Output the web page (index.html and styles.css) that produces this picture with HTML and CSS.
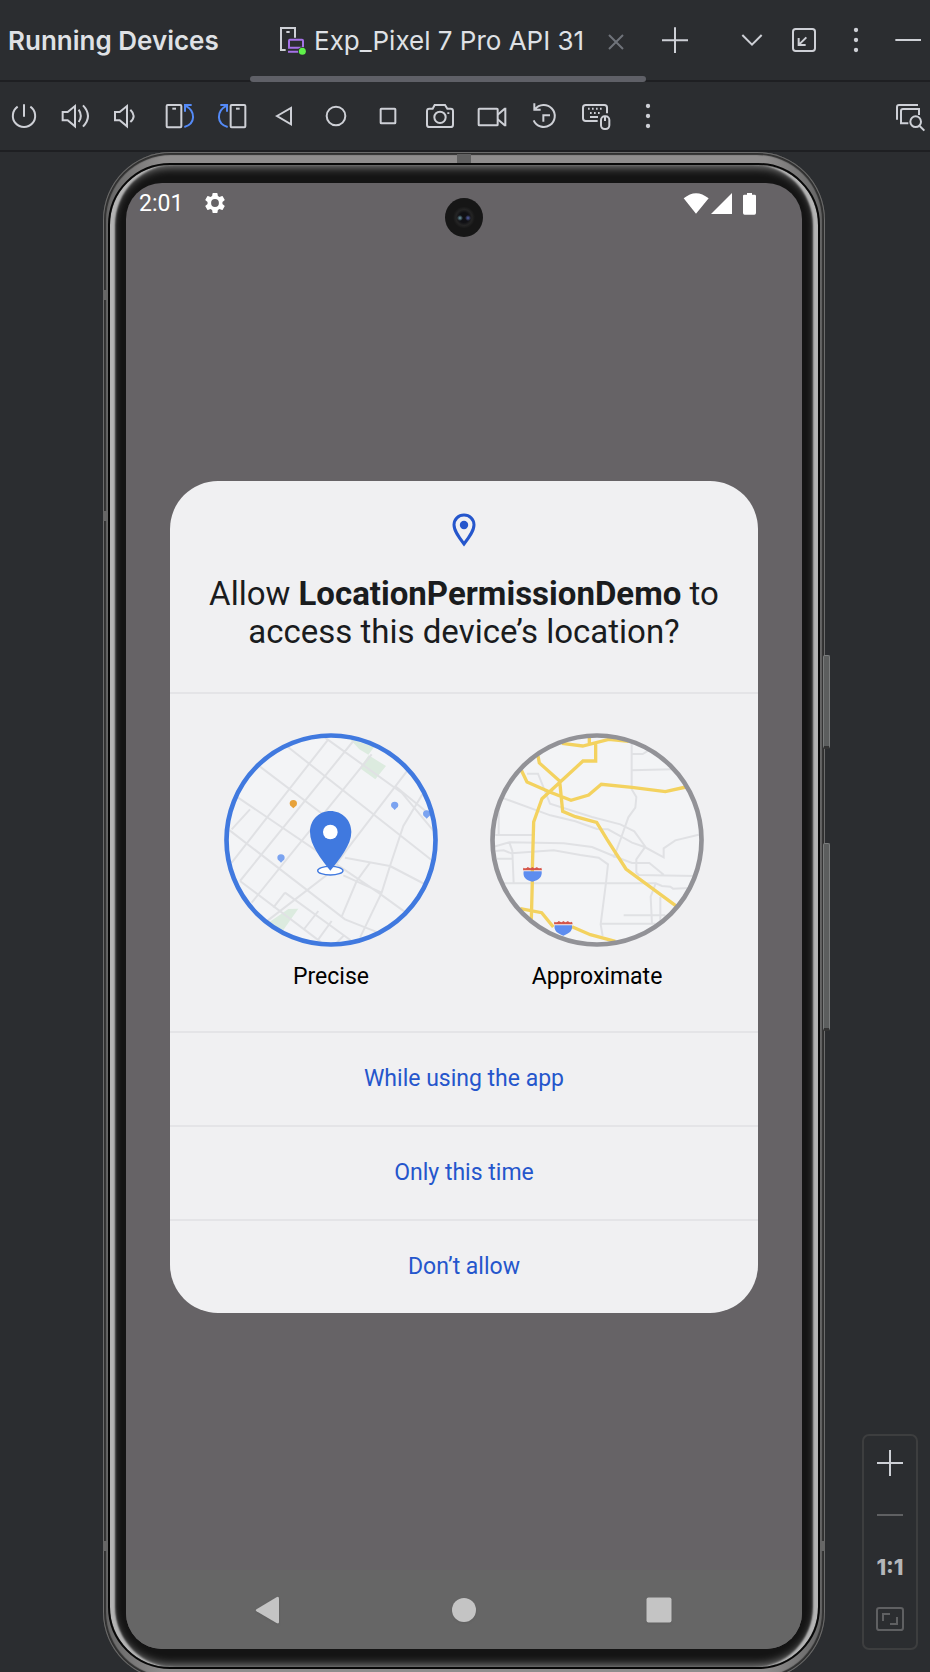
FILE: index.html
```html
<!DOCTYPE html>
<html lang="en">
<head>
<meta charset="utf-8">
<meta name="viewport" content="width=device-width, initial-scale=1">
<title>Running Devices</title>
<link rel="stylesheet" href="styles.css">
</head>
<body>
<header class="titlebar">
  <h1 class="window-title">Running Devices</h1>
  <div class="tab">
    <svg class="tab-icon" viewBox="837 81 84 90" aria-hidden="true">
      <path class="line" d="M857 153H843V87H885V116M859 99H869"/>
      <path class="purple" d="M868 122H906Q909 122 909 125V146H867V125Q867 122 870 122ZM864 158H898"/>
      <circle class="online-ring" cx="907" cy="157" r="13"/><circle class="online" cx="907" cy="157" r="10.5"/>
    </svg>
    <span class="tab-name">Exp_Pixel 7 Pro API 31</span>
    <button class="close" aria-label="Close tab"><svg viewBox="429 102 48 48"><path class="line" d="M432 105L474 147M474 105L432 147"/></svg></button>
  </div>
  <button class="tool add" aria-label="Add device"><svg viewBox="582 69 96 96"><path class="line" d="M630 79V156M591 117.500H669"/></svg></button>
  <div class="window-actions">
    <button class="tool" aria-label="Tabs"><svg viewBox="813 72 96 96"><path class="line" d="M832 105L861 134L890 105"/></svg></button>
    <button class="tool" aria-label="View mode"><svg viewBox="969 72 96 96"><rect class="line" x="984" y="87" width="66" height="66" rx="8"/><path class="line" d="M1001 114V135H1022M1002 134L1024 112"/></svg></button>
    <button class="tool" aria-label="Options"><svg viewBox="1125 72 96 96"><g class="dots"><circle cx="1173" cy="90" r="6.500"/><circle cx="1173" cy="120" r="6.500"/><circle cx="1173" cy="150" r="6.500"/></g></svg></button>
    <button class="tool" aria-label="Hide"><svg viewBox="1281 72 96 96"><path class="line" d="M1291 120H1368"/></svg></button>
  </div>
</header>

<nav class="toolbar" aria-label="Device controls">
  <button class="tool" aria-label="Power"><svg viewBox="24 300 96 96"><path class="line" d="M72 313V350M53 320A33.500 33.500 0 1 0 91 320"/></svg></button>
  <button class="tool" aria-label="Volume up"><svg viewBox="180 300 96 96"><path class="line" d="M188 336H203L225 318V379L203 361H188ZM236 329Q249 348 236 366M249 316Q279 348 249 380"/></svg></button>
  <button class="tool" aria-label="Volume down"><svg viewBox="336 300 96 96"><path class="line" d="M345 336H359L381 318V379L359 361H345ZM391 329Q411 348 391 366"/></svg></button>
  <button class="tool" aria-label="Rotate left"><svg viewBox="492 300 96 96"><rect class="line" x="500" y="315" width="44" height="67" rx="3"/><path class="line" d="M517 326H528"/><path class="blue" d="M575 315H555V335M556 317C588 334 587 371 553 381"/></svg></button>
  <button class="tool" aria-label="Rotate right"><svg viewBox="648 300 96 96"><rect class="line" x="692" y="315" width="44" height="67" rx="3"/><path class="line" d="M708 326H719"/><path class="blue" d="M661 315H681V335M680 317C648 334 649 371 683 381"/></svg></button>
  <button class="tool" aria-label="Back"><svg viewBox="804 300 96 96"><path class="line" d="M831 348L873 324V373Z"/></svg></button>
  <button class="tool" aria-label="Home"><svg viewBox="960 300 96 96"><circle class="line" cx="1008" cy="348" r="28"/></svg></button>
  <button class="tool" aria-label="Overview"><svg viewBox="1116 300 96 96"><rect class="line" x="1142" y="326" width="44" height="44" rx="2"/></svg></button>
  <button class="tool" aria-label="Screenshot"><svg viewBox="1272 300 96 96"><path class="line" d="M1288 326H1298L1304 315H1335L1342 326H1352Q1359 326 1359 333V374Q1359 381 1352 381H1288Q1281 381 1281 374V333Q1281 326 1288 326ZM1345 337V342"/><circle class="line" cx="1320" cy="352" r="17"/></svg></button>
  <button class="tool" aria-label="Record"><svg viewBox="33 300 96 96"><rect class="line" x="41" y="326" width="57" height="50" rx="2"/><path class="line" d="M98 344L119 326H121V376H119L98 358"/></svg></button>
  <button class="tool" aria-label="Snapshots"><svg viewBox="189 300 96 96"><path class="line" d="M208 310V329H227M210 328A33 33 0 1 1 206 361M235 365V346H255"/></svg></button>
  <button class="tool" aria-label="Hardware input"><svg viewBox="345 300 96 96"><path class="line" d="M398 363H362Q354 363 354 355V323Q354 315 362 315H418Q426 315 426 323V340M375 351H399"/><path class="dash" d="M369 326H412M375 339H408"/><rect class="line" x="408" y="349" width="25" height="38" rx="11"/><path class="line" d="M420 351V363"/></svg></button>
  <button class="tool" aria-label="More"><svg viewBox="501 300 96 96"><g class="dots"><circle cx="549" cy="318" r="6.500"/><circle cx="549" cy="348" r="6.500"/><circle cx="549" cy="378" r="6.500"/></g></svg></button>
  <button class="tool inspect" aria-label="Inspect UI"><svg viewBox="1287 300 96 96"><path class="line" d="M1296 359V321Q1296 315 1302 315H1359M1330 370H1308V333Q1308 327 1314 327H1362V345M1364 378L1378 392"/><circle class="line" cx="1352" cy="365" r="16"/></svg></button>
</nav>

<main class="workspace">
  <div class="device">
    <span class="side-key power-key"></span>
    <span class="side-key volume-key"></span>
    <div class="bezel">
      <div class="screen">
        <span class="camera"></span>
        <div class="status">
          <time>2:01</time>
          <svg class="gear" viewBox="0 0 24 24" aria-hidden="true"><path d="M19.430 12.980a7.800 7.800 0 0 0 0-1.960l2.110-1.650a.5.5 0 0 0 .12-.64l-2-3.460a.5.5 0 0 0-.61-.22l-2.490 1a7.300 7.300 0 0 0-1.690-.98l-.38-2.650A.5.500 0 0 0 14 2h-4a.5.500 0 0 0-.49.420l-.38 2.650c-.61.250-1.170.59-1.690.98l-2.490-1a.5.500 0 0 0-.61.220l-2 3.460a.5.500 0 0 0 .12.640l2.110 1.650a7.800 7.800 0 0 0 0 1.960l-2.110 1.650a.5.500 0 0 0-.12.640l2 3.460c.12.220.39.300.61.220l2.490-1c.52.400 1.080.73 1.690.98l.38 2.650c.03.240.24.420.49.420h4c.25 0 .46-.18.490-.42l.38-2.650a7.300 7.300 0 0 0 1.690-.98l2.490 1c.23.090.49 0 .61-.22l2-3.460a.5.500 0 0 0-.12-.64zM12 15.900a3.900 3.900 0 1 1 0-7.800 3.900 3.900 0 0 1 0 7.800z"/></svg>
          <svg class="signals" viewBox="729 153 222 69" aria-hidden="true"><path d="M768 218L731 172Q768 141 806 172ZM813 219L876 156V219ZM921 156H936V161H944Q948 161 948 165V216Q948 221 943 221H914Q909 221 909 216V165Q909 161 913 161H921Z"/></svg>
        </div>

        <div class="stage">
          <section class="dialog" role="dialog" aria-labelledby="question">
            <div class="prompt">
              <svg class="pin" viewBox="0 0 24 34" aria-hidden="true"><path d="M12 2C6.400 2 2 6.300 2 11.800C2 18 7 24.500 12 31C17 24.500 22 18 22 11.800C22 6.300 17.600 2 12 2Z"/><circle cx="12" cy="12" r="4.200"/></svg>
              <h2 id="question">Allow <strong>LocationPermissionDemo</strong> to access this device’s location?</h2>
            </div>

            <div class="accuracy">
              <label class="choice">
                <input type="radio" name="accuracy" checked>
                <svg class="map" viewBox="27 21 642 642" aria-hidden="true">
                  <clipPath id="disc-a"><circle cx="348" cy="342" r="313"/></clipPath>
                  <circle class="land" cx="348" cy="342" r="313"/>
                  <g clip-path="url(#disc-a)">
                    <path class="park" d="M405 40L478 62L460 86L433 70ZM461 88L513 120L481 160L434 126ZM160 590Q190 570 220 549L250 548L205 612Z"/>
                    <path class="road" d="M215 60L660 410M135 122L350 285M65 212L490 500L580 565M40 310L390 580L490 620M75 465L320 650M330 35L560 200L660 320M540 180L650 270M340 40L50 410M415 45L75 465M470 85L110 530M580 130L400 365L345 440L150 590M105 250L50 310M310 555L265 612M210 500L175 545M350 585L310 640M385 630L360 655M210 500L410 645M390 395L525 420L500 500L435 635M525 420L565 300L625 200M525 420L640 480M465 410L425 465L380 572M385 448L500 500"/>
                    <g class="poi"><path d="M539 227a11 11 0 0 1 11 11q0 6-6 9l-5 5-5-5q-6-3-6-9a11 11 0 0 1 11-11z"/><path d="M635 253a11 11 0 0 1 11 11q0 6-6 9l-5 5-5-5q-6-3-6-9a11 11 0 0 1 11-11z"/><path d="M198 385a11 11 0 0 1 11 11q0 6-6 9l-5 5-5-5q-6-3-6-9a11 11 0 0 1 11-11z"/><path class="food" d="M235 222a11 11 0 0 1 11 11q0 6-6 9l-5 5-5-5q-6-3-6-9a11 11 0 0 1 11-11z"/></g>
                  </g>
                  <ellipse class="target" cx="346" cy="434" rx="38" ry="13"/>
                  <path class="marker" d="M346 255C312 255 285 282 285 318C285 357 318 399 346 434C374 399 409 357 409 318C409 282 381 255 346 255Z"/>
                  <circle class="hole" cx="346" cy="318" r="22"/>
                  <circle class="rim selected" cx="348" cy="342" r="313.500"/>
                </svg>
                <span>Precise</span>
              </label>
              <label class="choice">
                <input type="radio" name="accuracy">
                <svg class="map" viewBox="24 21 642 642" aria-hidden="true">
                  <clipPath id="disc-b"><circle cx="345" cy="342" r="313"/></clipPath>
                  <circle class="land" cx="345" cy="342" r="313"/>
                  <g clip-path="url(#disc-b)">
                    <path class="road" d="M135 143H168L204 233L330 273L415 295L457 316L490 362L463 400V440L470 447L640 450M65 217L205 268L280 286L345 309L378 310L415 330L450 350L488 363L545 394V367L580 343L650 326M449 50V190L463 213L460 245L439 274L415 342L395 395M449 84H482L500 73M449 133L570 130M50 225V330M40 327H152M35 362L82 349L245 352L330 363L395 390L450 411H502L545 446M40 375L65 373L88 382L215 373L295 387L350 395L378 415L372 470L356 595L362 630M82 349L91 375L95 472M45 398H90M60 472H521L540 480L565 482L573 488L625 486M521 472L506 512L510 595M356 593H520M535 512V590M425 568H550"/>
                    <path class="highway" d="M168 90L172 111L233 165L242 256L280 272L344 289L375 340L432 429L585 542M118 133L135 168L205 199L267 223L320 207L358 175L450 184L550 197L612 183M341 50V105H303L180 218L155 288L151 430V465L148 580M240 52L302 60L380 40L440 46M322 35V52M115 548L179 560L214 603M270 602L325 626L400 646"/>
                    <path class="shield" d="M125 436H179C181 453 171 463 151 467C131 463 122 453 125 436ZM218 598H270C273 614 262 623 244 629C226 623 215 614 218 598Z"/>
                    <path class="crest" d="M124 425Q133 430 137 423Q146 430 151 423Q157 430 165 423Q169 430 178 425L180 433H123ZM217 587Q226 592 230 585Q239 592 244 585Q250 592 258 585Q262 592 270 587L272 595H216Z"/>
                  </g>
                  <circle class="rim" cx="345" cy="342" r="313.500"/>
                </svg>
                <span>Approximate</span>
              </label>
            </div>
            <button class="answer">While using the app</button>
            <button class="answer">Only this time</button>
            <button class="answer">Don’t allow</button>
          </section>
        </div>

        <div class="system-nav">
          <button aria-label="Back"><svg viewBox="0 0 28 28"><path d="M1.500 13.200L21.500 1.200Q24 0 24 2.500V26Q24 28.300 21.500 27L1.500 15.200Q0 14.200 1.500 13.200Z"/></svg></button>
          <button aria-label="Home"><svg viewBox="0 0 28 28"><circle cx="14" cy="14" r="12"/></svg></button>
          <button aria-label="Recent apps"><svg viewBox="0 0 28 28"><rect x="1.500" y="1.500" width="25" height="25" rx="2"/></svg></button>
        </div>
      </div>
    </div>
  </div>

  <div class="zoom">
    <button aria-label="Zoom in"><svg viewBox="819 81 96 96"><path class="line" d="M867 90V168M828 129H906"/></svg></button>
    <button class="off" aria-label="Zoom out"><svg viewBox="819 237 96 96"><path class="line" d="M828 285H906"/></svg></button>
    <button class="actual">1:1</button>
    <button class="off" aria-label="Zoom to fit"><svg viewBox="822 552 96 96"><rect class="line" x="831" y="567" width="78" height="66" rx="7"/><path class="line" d="M849 606V585H870M870 615H891V594"/></svg></button>
  </div>
</main>
</body>
</html>
```
FILE: styles.css
```css
* { box-sizing: border-box; }

body {
  margin: 0;
  height: 100vh;
  min-height: 1200px;
  display: flex;
  flex-direction: column;
  overflow-x: hidden;
  background: #2b2d30;
  color: #dfe1e5;
  font-family: Inter, sans-serif;
  font-size: 26px;
}

button {
  padding: 0;
  border: 0;
  background: none;
  color: inherit;
  font: inherit;
}

svg { display: block; }

/* Icon strokes */
.line, .purple, .blue, .dash {
  fill: none;
  stroke: #ced0d6;
  stroke-width: 6;
}
.purple { stroke: #a571e6; }
.blue { stroke: #548af7; }
.dash { stroke-dasharray: 5 7; }
.dots { fill: #ced0d6; }
.online { fill: #5ff04a; }
.online-ring { fill: #2b2d30; }

/* Title bar */
.titlebar {
  flex: none;
  display: flex;
  align-items: center;
  height: 82px;
  padding: 0 2px 0 8px;
  border-bottom: 2px solid #1e1f22;
}
.window-title {
  margin: 0;
  flex: none;
  width: 242px;
  padding-top: 2px;
  font-size: 26px;
  font-weight: 600;
  line-height: 32px;
}
.tab {
  position: relative;
  flex: none;
  align-self: stretch;
  display: flex;
  align-items: center;
  gap: 7px;
  width: 396px;
  padding: 2px 22px 0 29px;
}
.tab::after {
  content: "";
  position: absolute;
  inset: auto 0 -2px;
  height: 6px;
  border-radius: 3px;
  background: #5f6067;
}
.tab-icon { width: 28px; height: 30px; }
.tab-name { line-height: 32px; white-space: nowrap; }
.close { margin-left: auto; padding-top: 2px; }
.close svg { width: 16px; height: 16px; }
.close .line { stroke: #6f737a; }
.tool {
  flex: none;
  display: grid;
  place-items: center;
  width: 40px;
  height: 40px;
}
.tool svg { width: 32px; height: 32px; }
.add { margin-left: 9px; }
.window-actions {
  display: flex;
  gap: 12px;
  margin-left: auto;
}

.toolbar {
  flex: none;
  display: flex;
  align-items: center;
  gap: 12px;
  height: 70px;
  padding-left: 4px;
  border-bottom: 2px solid #1e1f22;
}
.inspect { margin-left: auto; }

/* Phone */
.workspace {
  position: relative;
  flex: 1;
  min-height: 0;
  display: flex;
  justify-content: center;
  padding-right: 2px;
  overflow: hidden;
}
.device {
  position: relative;
  flex: 0 1 722px;
  display: flex;
  margin-bottom: -8px;
  padding: 11px 5px;
  border-radius: 68px;
  background: linear-gradient(90deg, #636363 0, #8f8d8d 60px, #8f8d8d calc(100% - 60px), #636363 100%);
  box-shadow: inset 0 0 0 1px #6c6c6c, inset 0 0 1px 3px #303030;
}
/* Antenna breaks in the metal rim */
.device::before {
  content: "";
  position: absolute;
  inset: 0;
  background:
    linear-gradient(#606060, #606060) 50% 2px / 14px 9px,
    linear-gradient(#666, #666) 0 138px / 5px 10px,
    linear-gradient(#666, #666) 0 359px / 5px 10px,
    linear-gradient(#666, #666) 0 1389px / 5px 10px,
    linear-gradient(#666, #666) 100% 1389px / 5px 10px;
  background-repeat: no-repeat;
}
.bezel {
  position: relative;
  flex: 1;
  display: flex;
  padding: 18px 16px;
  border: 2px solid #080808;
  border-radius: 62px;
  background: #141414;
  background-clip: padding-box;
  box-shadow: inset 6px 0 2px -1px #b4b4b4, inset -6px 0 2px -1px #b4b4b4, inset 0 0 10px 2px #8a8a8a;
}
.side-key {
  position: absolute;
  right: -5px;
  width: 7px;
  border: 1px solid #7a7c7c;
  border-width: 1px 1px 3px;
  border-bottom-color: #333;
  border-radius: 2px;
  background: #5c5e5e;
}
.power-key { top: 503px; height: 94px; }
.volume-key { top: 691px; height: 188px; }

.screen {
  position: relative;
  flex: 1;
  display: flex;
  flex-direction: column;
  border-radius: 36px;
  overflow: hidden;
  background: #666366;
  font-family: Roboto, sans-serif;
  font-size: 23px;
}
.camera {
  position: absolute;
  top: 15px;
  left: 50%;
  width: 38px;
  height: 39px;
  margin-left: -19px;
  border-radius: 50%;
  background:
    radial-gradient(circle at 15px 20px, #6d9aa6 0, transparent 3px),
    radial-gradient(circle at 23px 20px, #5560a8 0, transparent 3px),
    radial-gradient(circle, #101014 0 5px, #242424 8px, #161616 11px);
}
.status {
  flex: none;
  display: flex;
  align-items: center;
  height: 40px;
  padding: 0 45px 0 13px;
  color: #fff;
}
.gear { width: 24px; height: 24px; margin-left: 20px; fill: #fff; }
.signals { width: 74px; height: 23px; margin-left: auto; fill: #fff; }
.stage {
  flex: 1;
  display: flex;
  align-items: center;
  padding: 0 44px;
}
.dialog {
  flex: 1;
  border-radius: 48px;
  overflow: hidden;
  background: #f0f0f2;
  color: #1a1c1e;
}
.prompt {
  display: flex;
  flex-direction: column;
  align-items: center;
  gap: 28px;
  padding: 32px 24px 41px;
}
.pin { width: 24px; height: 34px; fill: #2556cc; }
.pin path { fill: none; stroke: #2556cc; stroke-width: 3; }
.prompt h2 {
  margin: 0;
  font-size: 33px;
  font-weight: 400;
  line-height: 38px;
  text-align: center;
}
.prompt strong { font-weight: 700; }
.accuracy {
  display: flex;
  justify-content: center;
  gap: 52px;
  padding: 39px 0 38px;
  border-top: 2px solid #e4e4e7;
}
.choice {
  position: relative;
  display: flex;
  flex-direction: column;
  align-items: center;
  gap: 14px;
  color: #000;
  line-height: 32px;
}
.choice input {
  position: absolute;
  inset: 0;
  margin: 0;
  opacity: 0;
}
.map { width: 214px; height: 214px; }
.land { fill: #f3f4f6; }
.park { fill: #dcebdf; }
.road { fill: none; stroke: #e0e1e4; stroke-width: 6; }
.highway { fill: none; stroke: #f3d25f; stroke-width: 10; }
.poi { fill: #7ba3f0; }
.food { fill: #e7a23b; }
.target { fill: #fff; stroke: #4079df; stroke-width: 4; }
.marker { fill: #4079df; }
.hole { fill: #fff; }
.shield { fill: #5e8df0; }
.crest { fill: #d5564a; }
.rim { fill: none; stroke: #929297; stroke-width: 14; }
.rim.selected { stroke: #4079df; }
.answer {
  display: block;
  width: 100%;
  height: 94px;
  border-top: 2px solid #e4e4e7;
  color: #2556cc;
}
.system-nav {
  flex: none;
  display: flex;
  justify-content: center;
  gap: 167px;
  height: 79px;
  background: #666;
}
.system-nav button { filter: drop-shadow(0 1px 1px #5557); }
.system-nav svg { width: 28px; height: 28px; fill: #c4c4c4; }

/* Zoom controls over the canvas */
.zoom {
  position: absolute;
  right: 12px;
  bottom: 22px;
  display: flex;
  flex-direction: column;
  width: 56px;
  padding: 1px 0 3px;
  border: 2px solid #3d3e3f;
  border-radius: 7px;
}
.zoom button {
  display: grid;
  place-items: center;
  height: 52px;
}
.zoom svg { width: 32px; height: 32px; }
.zoom .off .line { stroke: #5f6062; }
.zoom .actual {
  color: #b4b6ba;
  font-size: 22px;
  font-weight: 800;
}
```
